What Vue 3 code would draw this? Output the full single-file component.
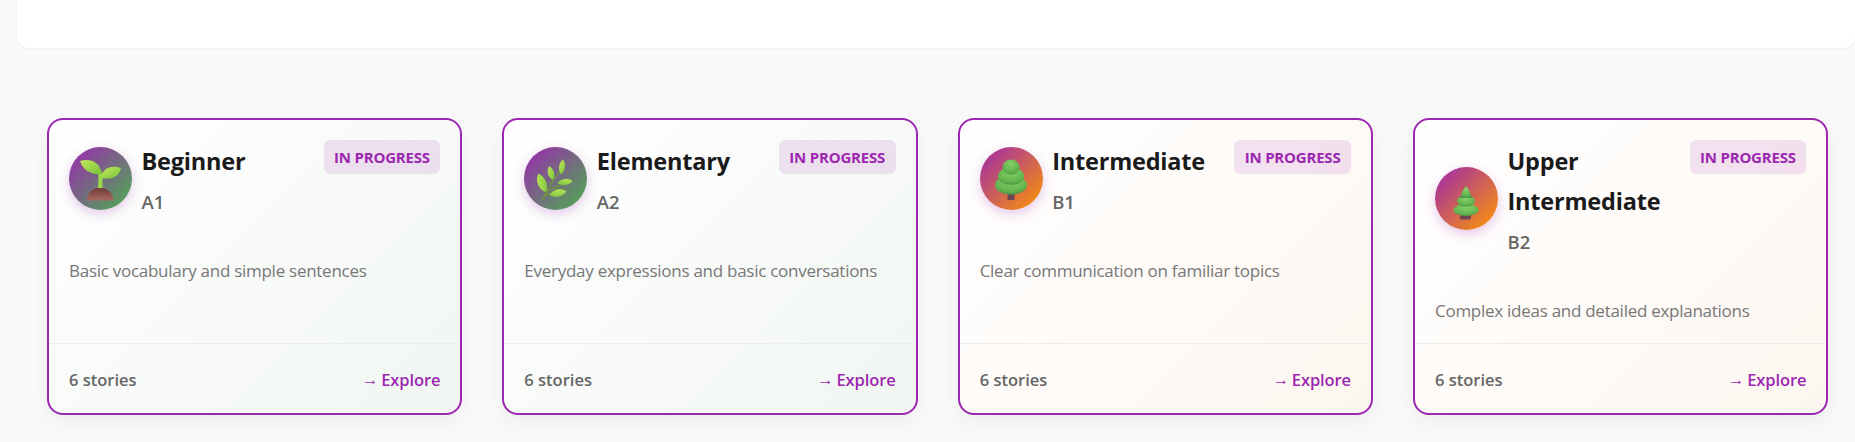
<script setup>
const levels = [
  { name: 'Beginner', code: 'A1', desc: 'Basic vocabulary and simple sentences', tone: 'green', icon: 'sprout' },
  { name: 'Elementary', code: 'A2', desc: 'Everyday expressions and basic conversations', tone: 'green', icon: 'herb' },
  { name: 'Intermediate', code: 'B1', desc: 'Clear communication on familiar topics', tone: 'orange', icon: 'tree' },
  { name: 'Upper Intermediate', code: 'B2', desc: 'Complex ideas and detailed explanations', tone: 'orange', icon: 'pine' }
]
const herbLeaves = [
  'translate(18 36) rotate(-22) scale(0.95 1)',
  'translate(27 26) rotate(-15) scale(0.7 0.7)',
  'translate(38 20) rotate(8) scale(0.65 0.75)',
  'translate(41 35) rotate(82) scale(0.65 0.75)',
  'translate(34 46) rotate(78) scale(0.8 0.85)'
]
</script>

<template>
  <div class="page">
    <div class="panel"></div>
    <div class="grid">
      <article v-for="l in levels" :key="l.code" class="card" :class="l.tone">
        <header class="head">
          <div class="avatar">
            <svg viewBox="0 0 63 63" width="63" height="63">
              <defs>
                <linearGradient id="lf" x1="0" y1="0" x2="1" y2="1">
                  <stop offset="0" stop-color="#c6ea5a" />
                  <stop offset="1" stop-color="#74c23c" />
                </linearGradient>
                <radialGradient id="bl" cx="0.5" cy="0.3" r="0.75">
                  <stop offset="0" stop-color="#86cf66" />
                  <stop offset="0.7" stop-color="#62b450" />
                  <stop offset="1" stop-color="#3f9044" />
                </radialGradient>
                <linearGradient id="mo" x1="0" y1="0" x2="0" y2="1">
                  <stop offset="0" stop-color="#6f3d35" />
                  <stop offset="1" stop-color="#a86a60" />
                </linearGradient>
              </defs>
              <g v-if="l.icon === 'sprout'">
                <path d="M29 41 C29.500 34 29.500 28 29 23 L33.500 25 L33.500 41 Z" fill="#9ad84a" />
                <path d="M11 14 C20 11 31 14 33 27 C23 28 14 24 11 14 Z" fill="url(#lf)" />
                <path d="M52 21 C43 18 34 20 32 31 C42 33 50 30 52 21 Z" fill="url(#lf)" />
                <path d="M18 53.500 C18 45 24 41 31 41 C38 41 44 45 44.500 53.500 Z" fill="url(#mo)" />
              </g>
              <g v-else-if="l.icon === 'herb'">
                <path d="M19 53 C22 42 30 33 37 22 M24 44 C29 42 34 40 41 35 M22 47 C26 48 30 47 34 46" stroke="#6f9a34" stroke-width="1.300" fill="none" />
                <path v-for="(t, i) in herbLeaves" :key="i" d="M0 -10 C6 -5 6 5 0 10 C-6 5 -6 -5 0 -10 Z" :transform="t" fill="url(#lf)" />
              </g>
              <g v-else-if="l.icon === 'tree'">
                <rect x="27.500" y="44" width="7" height="9" fill="#6d4650" />
                <ellipse cx="31" cy="38" rx="16" ry="9.500" fill="url(#bl)" />
                <ellipse cx="31" cy="29" rx="13" ry="9" fill="url(#bl)" />
                <ellipse cx="31" cy="20" rx="8.500" ry="7.500" fill="url(#bl)" />
              </g>
              <g v-else>
                <rect x="25" y="48" width="11" height="4.500" rx="1.500" fill="#6d4650" />
                <ellipse cx="31" cy="43" rx="12.500" ry="6" fill="url(#bl)" />
                <ellipse cx="31" cy="34" rx="9" ry="5.500" fill="url(#bl)" />
                <path d="M31 19 C34 22 36 27 36.500 31 L25.500 31 C26 27 28 22 31 19 Z" fill="url(#bl)" />
              </g>
            </svg>
          </div>
          <div class="titles">
            <h3>{{ l.name }}</h3>
            <span class="code">{{ l.code }}</span>
          </div>
          <span class="badge">IN PROGRESS</span>
        </header>
        <p class="desc">{{ l.desc }}</p>
        <footer class="foot">
          <span class="count">6 stories</span>
          <span class="explore"><span class="arrow">→</span>Explore</span>
        </footer>
      </article>
    </div>
  </div>
</template>

<style scoped>
.page {
  width: 1855px;
  height: 442px;
  overflow: hidden;
  background: #fafafa;
  font-family: "Open Sans", "Noto Sans", sans-serif;
}
.panel {
  height: 48px;
  margin-left: 17px;
  background: #fff;
  border-radius: 0 0 12px 12px;
  box-shadow: 0 1px 3px rgba(0, 0, 0, 0.06);
}
.grid {
  display: grid;
  grid-template-columns: repeat(4, 415.33px);
  gap: 40px;
  padding: 70px 0 0 47px;
}
.card {
  height: 297px;
  box-sizing: border-box;
  display: flex;
  flex-direction: column;
  border: 2px solid #9c27b0;
  border-radius: 16px;
  box-shadow: 0 8px 24px rgba(0, 0, 0, 0.06);
}
.card.green { background: linear-gradient(135deg, #ffffff 0%, #f1f6f2 100%); }
.card.orange { background: linear-gradient(135deg, #ffffff 0%, #fdf6f0 100%); }
.head {
  display: flex;
  align-items: center;
  padding: 20px 20px 0;
}
.avatar {
  width: 63px;
  height: 63px;
  flex: none;
  border-radius: 50%;
  margin-right: 9.500px;
  box-shadow: 0 4px 12px rgba(156, 39, 176, 0.25);
  display: flex;
}
.green .avatar { background: linear-gradient(135deg, #9c27b0, #4caf50); }
.orange .avatar { background: linear-gradient(135deg, #9c27b0, #ff9800); }
.titles {
  flex: 1;
  min-width: 0;
  display: flex;
  flex-direction: column;
  align-items: flex-start;
}
h3 {
  margin: 0;
  padding-top: 1px;
  font-size: 23.5px;
  line-height: 40px;
  font-weight: 700;
  color: #1a1a1a;
  letter-spacing: -0.2px;
}
.code {
  margin-top: 5px;
  font-size: 18.5px;
  line-height: 31px;
  font-weight: 600;
  color: #666;
}
.badge {
  align-self: flex-start;
  flex: none;
  height: 34px;
  line-height: 34px;
  padding: 0 10.500px;
  border-radius: 6px;
  background: rgba(156, 39, 176, 0.12);
  color: #9c27b0;
  font-size: 15px;
  font-weight: 700;
  letter-spacing: -0.2px;
}
.desc {
  margin: 41px 0 0;
  padding: 0 20px;
  font-size: 17px;
  line-height: 26px;
  color: #777;
  letter-spacing: -0.27px;
}
.foot {
  flex: none;
  margin-top: auto;
  height: 70px;
  box-sizing: border-box;
  display: flex;
  justify-content: space-between;
  align-items: center;
  padding: 1px 20px 0;
  border-top: 1px solid #ececec;
  font-size: 16.5px;
  font-weight: 600;
}
.count { color: #666; }
.explore { color: #9c27b0; letter-spacing: -0.1px; display: flex; align-items: center; }
.arrow {
  font-family: "Liberation Sans", sans-serif;
  font-size: 16.500px;
  line-height: 1;
  font-weight: 400;
  margin-right: 3px;
}
</style>
